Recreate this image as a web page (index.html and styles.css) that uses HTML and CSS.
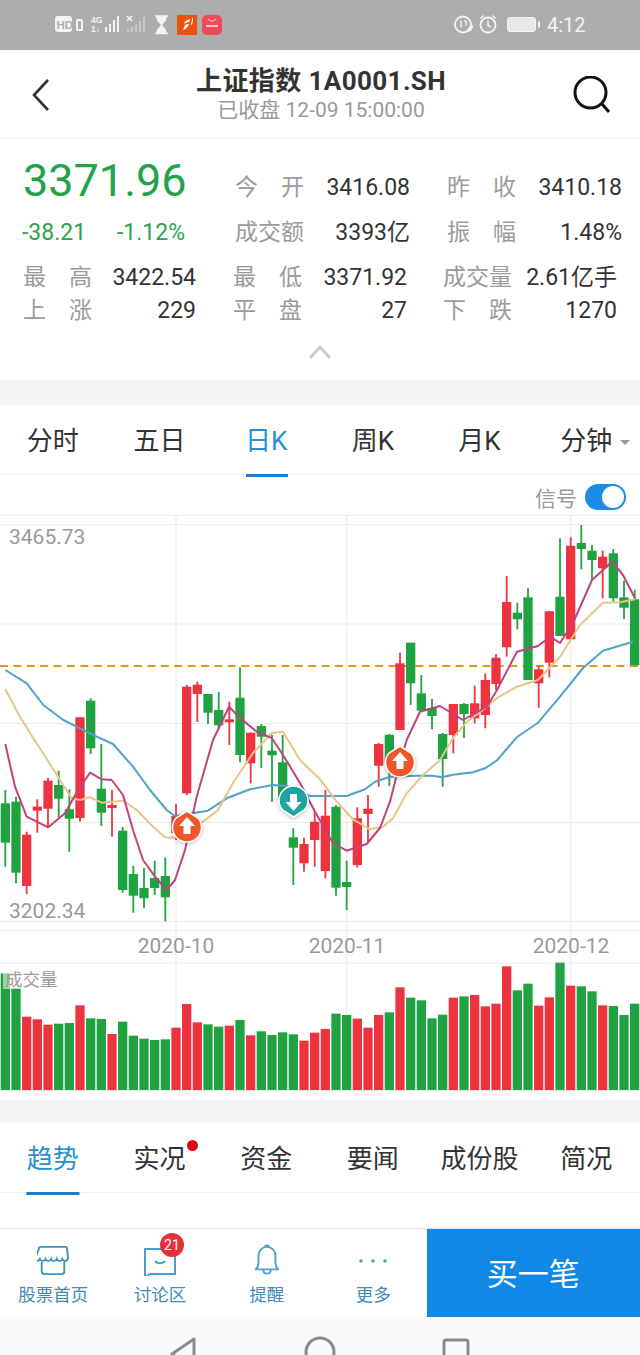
FILE: index.html
```html
<!DOCTYPE html>
<html lang="zh-CN">
<head>
<meta charset="utf-8">
<title>上证指数</title>
<link rel="stylesheet" href="styles.css">
</head>
<body>
<div class="page">
  <div class="status">
    <svg class="status-left" viewBox="55 14 167 24" width="167" height="24">
      <rect x="55" y="17" width="17" height="16" rx="3" fill="#f4f4f4"/>
      <text x="56.5" y="30" class="st-hd">HD</text>
      <rect x="76" y="20" width="7" height="12" rx="1.5" fill="#f4f4f4"/>
      <rect x="78" y="22" width="3" height="8" fill="#adadad"/>
      <text x="91" y="23.5" class="st-4g">4G</text>
      <text x="91" y="33" class="st-4g">1↓</text>
      <g fill="#f4f4f4">
        <rect x="105" y="28" width="2" height="5"/><rect x="109" y="25" width="2" height="8"/>
        <rect x="113" y="21" width="2" height="12"/><rect x="117" y="17" width="2" height="16"/>
      </g>
      <path d="M127 17l5 5M132 17l-5 5" stroke="#f4f4f4" stroke-width="1.6"/>
      <g fill="#c9c9c9">
        <rect x="127" y="30" width="2" height="3"/><rect x="131" y="28" width="2" height="5"/>
        <rect x="135" y="26" width="2" height="7"/><rect x="139" y="22" width="2" height="11"/><rect x="143" y="18" width="2" height="15"/>
      </g>
      <path d="M155 17h13M155 34.500h13M157 17.500c0 6 4 6 4.500 8.500c.5-2.500 4.500-2.500 4.500-8.500zM157 34c0-5 4-5.500 4.500-8c.5 2.500 4.500 3 4.500 8z" fill="#f4f4f4" stroke="#f4f4f4" stroke-width="1.400"/>
      <rect x="177" y="16" width="20" height="20" fill="#ee5010"/>
      <path d="M183 31l2-5c2-1 3-1 4-1c-1 3-3 5-6 6zM184 25c1-3 3-4 6-5c0 2-1 3-1 3c-2 0-3 1-5 2zM191 24c1-1 1-3 1-5l1 0c0 2 0 5-2 8z" fill="#fff"/>
      <rect x="202" y="16" width="20" height="20" rx="5" fill="#ee4a58"/>
      <path d="M208 20l3 2h2l3-2" stroke="#ffd0d0" fill="none"/>
      <rect x="206" y="26" width="12" height="2" fill="#ffc8c8"/>
    </svg>
    <div class="status-right">
      <svg viewBox="455 14 87 24" width="87" height="24">
        <circle cx="464" cy="25.500" r="8" fill="none" stroke="#f4f4f4" stroke-width="1.800"/>
        <path d="M462 21.500v7M465 22h2v5" stroke="#f4f4f4" stroke-width="1.400" fill="none"/>
        <path d="M468 33c0-4 2-6 6-7c0 4-2 7-6 7z" fill="#f4f4f4"/>
        <circle cx="489" cy="26" r="7.500" fill="none" stroke="#f4f4f4" stroke-width="1.800"/>
        <path d="M489 21.500v5l3 1.500M481.500 19.500l3-3M496.500 19.500l-3-3" stroke="#f4f4f4" stroke-width="1.600" fill="none"/>
        <rect x="508.500" y="18.500" width="28" height="14" rx="2.500" fill="#e8e8e8" stroke="#f4f4f4"/>
        <rect x="539" y="22.500" width="2" height="6" fill="#f4f4f4"/>
      </svg>
      <span class="clock">4:12</span>
    </div>
  </div>

  <header class="head">
    <svg class="head-icon" viewBox="0 0 20 34" width="20" height="34"><path d="M17 2L3 17l14 15" fill="none" stroke="#333" stroke-width="2.600"/></svg>
    <div class="head-title">
      <div class="name">上证指数 1A0001.SH</div>
      <div class="sub">已收盘 12-09 15:00:00</div>
    </div>
    <svg class="head-icon" viewBox="0 0 38 38" width="38" height="38"><circle cx="17.500" cy="16.500" r="15.500" fill="none" stroke="#111" stroke-width="3"/><path d="M29 28l7 8" stroke="#111" stroke-width="3"/></svg>
  </header>

  <section class="quote">
    <div class="quote-top">
      <div class="price-col">
        <div class="price">3371.96</div>
        <div class="change"><span>-38.21</span><span>-1.12%</span></div>
      </div>
      <div class="stats stats-top">
        <span class="lbl">今 开</span><span class="val">3416.08</span>
        <span class="lbl">昨 收</span><span class="val">3410.18</span>
        <span class="lbl">成交额</span><span class="val">3393亿</span>
        <span class="lbl">振 幅</span><span class="val">1.48%</span>
      </div>
    </div>
    <div class="stats stats-bottom">
      <span class="lbl">最 高</span><span class="val">3422.54</span>
      <span class="lbl">最 低</span><span class="val">3371.92</span>
      <span class="lbl">成交量</span><span class="val">2.61亿手</span>
      <span class="lbl">上 涨</span><span class="val">229</span>
      <span class="lbl">平 盘</span><span class="val">27</span>
      <span class="lbl">下 跌</span><span class="val">1270</span>
    </div>
    <div class="collapse"><svg viewBox="0 0 24 14" width="24" height="14"><path d="M2 13L12 2l10 11" fill="none" stroke="#ccc" stroke-width="3"/></svg></div>
  </section>

  <div class="band band-a"></div>

  <nav class="tabs">
    <div class="tab">分时</div>
    <div class="tab">五日</div>
    <div class="tab on tab-k">日K</div>
    <div class="tab">周K</div>
    <div class="tab">月K</div>
    <div class="tab">分钟<i class="caret"></i></div>
  </nav>

  <div class="signal">
    <span>信号</span>
    <div class="toggle"><i></i></div>
  </div>

  <div class="chart">
    <svg id="kchart" viewBox="0 515 640 585" width="640" height="585">
      <g stroke="#ececec" stroke-width="1.200">
        <path d="M0 515.500H640M0 524.500H640M0 624H640M0 723.500H640M0 822.500H640M0 921.500H640M0 930.500H640M0 963H640M0 1090.500H640"/>
        <path d="M176 516V1090M346.700 516V1090M570.700 516V1090"/>
      </g>
      <g id="vols"></g>
      <path d="M0 666H640" stroke="#dd9a22" stroke-width="2" stroke-dasharray="8 5.400"/>
      <g id="candles"></g>
      <polyline class="ma blue" points="5.300,670 26.700,683.300 43.300,705 63.300,720 80,728.300 96.700,736.700 113,744 133,766.700 150,790 166.700,810 175,816 195,812.700 208,810.700 226.700,798.300 250,789.300 273,785 286.700,786 310,796 346.700,796 365,789.300 375,781.700 390,776.700 416.700,775.700 433,775.700 441.700,777.300 453,774.700 473,772.300 485,768.300 496.700,760.700 516.700,737.300 538,722.700 560,696.700 583,668 603,650.700 633,641.700"/>
      <polyline class="ma yellow" points="5.300,689.300 20,716.700 33.300,738.300 43,753 60,780 71.700,798.300 80,800 90,797.300 101.700,802.700 123,800.700 136.700,810 153,826.700 165,837.300 175,837.700 203,821.700 218,810 233,783 253,753 271.700,733 283,731.700 300,760 320,779.300 336.700,801.700 353,819.300 370,829.300 383,826.700 393,818.300 406.700,793.300 423,775 440,760 453,738 467,721.700 483,710 497,698 517,686.700 538,680 560,656.700 580,625 603,602.700 620,602.300 635,599.300"/>
      <polyline class="ma pink" points="5.300,744 15,786.700 26.700,816.700 48.300,827.300 65,813.300 78,790 90,772.700 101.700,779.300 111.700,780 123,795 133,830 143,860 155,876.700 166.700,890 175,880 185,850 196.700,796.700 213,740 229,706.700 240,718 256.700,731.700 271.700,738 283,755 300,783 315,811.700 333,843 346.700,850.700 366.700,844 380,828 390,801.700 398,770 406.700,740 420,711.700 440,706 463,720 487,706.700 497,690 517,651.700 538,646 550,636.700 560,643 573,623 592,580 612,561.700 623,575 635,598.300"/>
      <g class="marker">
        <path d="M187 811l11 7a14.500 14.500 0 1 1-22 0z" fill="#f0562a" stroke="#fff" stroke-width="1.500"/>
        <path d="M187 817l8 9h-4.500v8h-7v-8H179z" fill="#fff"/>
      </g>
      <g class="marker">
        <path d="M400 746l11 7a14.500 14.500 0 1 1-22 0z" fill="#f0562a" stroke="#fff" stroke-width="1.500"/>
        <path d="M400 752l8 9h-4.500v8h-7v-8H392z" fill="#fff"/>
      </g>
      <g class="marker">
        <path d="M293.500 817l11-7a14.500 14.500 0 1 0-22 0z" fill="#1ea3a3" stroke="#fff" stroke-width="1.500"/>
        <path d="M293.500 811l8-9h-4.500v-8h-7v8H285.500z" fill="#fff"/>
      </g>
      <rect x="3" y="971" width="55" height="18" fill="#fff" fill-opacity=".55"/>
      <text x="9" y="544" class="axis">3465.73</text>
      <text x="9" y="918" class="axis">3202.34</text>
      <text x="176" y="953" class="axis mid">2020-10</text>
      <text x="347" y="953" class="axis mid">2020-11</text>
      <text x="571" y="953" class="axis mid">2020-12</text>
      <text x="5" y="986" class="axis vol-label">成交量</text>
    </svg>
  </div>

  <div class="band band-b"></div>

  <nav class="tabs tabs-lower">
    <div class="tab on tab-wide">趋势</div>
    <div class="tab">实况<i class="dot"></i></div>
    <div class="tab">资金</div>
    <div class="tab">要闻</div>
    <div class="tab">成份股</div>
    <div class="tab">简况</div>
  </nav>

  <div class="spacer"></div>

  <footer class="foot">
    <div class="foot-item">
      <svg viewBox="0 0 34 32" width="32" height="32"><path d="M4 2h26a2 2 0 0 1 2 2l1 10c-2 5-5 3-6 1c-1 3-5 3-6 0c-1 3-5 3-6 0c-1 3-5 3-6 0c-1 3-5 3-6 0c-1 2-3 3-5-1L2 4a2 2 0 0 1 2-2z" fill="none" stroke="#3d93bb" stroke-width="2"/><path d="M5 18v10a3 3 0 0 0 3 3h18a3 3 0 0 0 3-3V18" fill="none" stroke="#3d93bb" stroke-width="2"/></svg>
      <span>股票首页</span>
    </div>
    <div class="foot-item">
      <div class="bubble">
        <svg viewBox="0 0 34 32" width="34" height="32"><path d="M2 5h30v25H7l-5 3z" fill="none" stroke="#4aa0c6" stroke-width="2"/><path d="M12 17c2 3 8 3 10 0" fill="none" stroke="#4aa0c6" stroke-width="2"/></svg>
        <b class="badge">21</b>
      </div>
      <span>讨论区</span>
    </div>
    <div class="foot-item">
      <svg viewBox="0 0 34 34" width="34" height="32"><path d="M5 27c2-2 3-3 3-7v-8c0-5 4-9 9-9s9 4 9 9v8c0 4 1 5 3 7z" fill="none" stroke="#4aa0c6" stroke-width="2" stroke-linejoin="round"/><path d="M13 27c0 6 8 6 8 0M15 3c0-2 4-2 4 0" fill="none" stroke="#4aa0c6" stroke-width="2"/></svg>
      <span>提醒</span>
    </div>
    <div class="foot-item">
      <svg viewBox="0 0 34 32" width="34" height="32"><g fill="#4aa0c6"><circle cx="5" cy="17" r="1.800"/><circle cx="17" cy="17" r="1.800"/><circle cx="29" cy="17" r="1.800"/></g></svg>
      <span>更多</span>
    </div>
    <button class="buy">买一笔</button>
  </footer>

  <div class="sysnav">
    <svg viewBox="0 1317 640 38" width="640" height="38">
      <path d="M194 1339v30l-22-15z" fill="none" stroke="#8a8a8a" stroke-width="3" stroke-linejoin="round"/>
      <circle cx="320" cy="1352" r="14" fill="none" stroke="#8a8a8a" stroke-width="3"/>
      <rect x="444" y="1340" width="24" height="30" rx="2" fill="none" stroke="#8a8a8a" stroke-width="3"/>
    </svg>
  </div>
</div>
<script src="chart.js"></script>
</body>
</html>
```
FILE: styles.css
```css
* { box-sizing: border-box; }
html, body { margin: 0; padding: 0; background: #fff; }
body { font-family: Roboto, "Noto Sans CJK SC", sans-serif; color: #333; }
.page { width: 640px; height: 1355px; overflow: hidden; display: flex; flex-direction: column; }

.status { height: 50px; flex: none; background: #adadad; display: flex; align-items: center; justify-content: space-between; padding: 0 55px; }
.status svg { display: block; }
.status-right { display: flex; align-items: center; gap: 6px; }
.clock { color: #f4f4f4; font-size: 20px; width: 38px; }
.st-hd { font: 700 11.500px "Liberation Sans", sans-serif; fill: #adadad; }
.st-4g { font: 700 8.500px "Liberation Sans", sans-serif; fill: #f4f4f4; }

.head { height: 89px; flex: none; display: grid; grid-template-columns: 1fr auto 1fr; align-items: center; padding: 1px 29px 0 31px; border-bottom: 1.500px solid #eee; }
.head-icon { display: block; }
.head-icon:last-child { justify-self: end; }
.head-title { text-align: center; }
.name { font-size: 26px; line-height: 30px; font-weight: 700; color: #333; letter-spacing: .4px; }
.sub { font-size: 21px; line-height: 28px; color: #999; }

.quote { height: 241px; flex: none; padding: 0 0 0 23px; }
.quote-top { display: flex; padding-top: 26px; height: 122px; }
.price-col { width: 212px; flex: none; margin-top: -7px; }
.price { font-size: 45px; line-height: 46px; color: #22a24a; margin-bottom: 6px; }
.change { width: 163px; display: flex; justify-content: space-between; font-size: 23px; line-height: 46px; color: #2da350; margin-left: -1px; }
.stats { display: grid; align-items: center; }
.stats-top { grid-template-columns: 69px 106px 106px 106px; grid-auto-rows: 45px; }
.stats-bottom { grid-template-columns: 69px 104px 106px 105px 105px 105px; grid-auto-rows: 33px; }
.lbl { font-size: 23px; line-height: 30px; color: #9b9b9b; text-align: justify; text-align-last: justify; width: 69px; display: block; }
.stats-top .lbl:nth-child(3), .stats-top .lbl:nth-child(7), .stats-bottom .lbl:nth-child(3), .stats-bottom .lbl:nth-child(9) { margin-left: 37px; }
.stats-bottom .lbl:nth-child(5), .stats-bottom .lbl:nth-child(11) { margin-left: 36px; }
.val { font-size: 23px; line-height: 30px; color: #333; text-align: right; }
.collapse { display: flex; justify-content: center; margin: 18px 0 0 -23px; }
.collapse svg { display: block; }

.band { flex: none; background: #f5f5f5; }
.band-a { height: 25px; }
.band-b { height: 23px; }

.tabs { height: 70px; flex: none; display: grid; grid-template-columns: repeat(6, 1fr); border-bottom: 1.500px solid #eee; }
.tab { position: relative; text-align: center; font-size: 26px; line-height: 72px; color: #333; padding-right: 1px; }
.tab.on { color: #2a8fd0; }
.tab.on::after { content: ""; position: absolute; left: 50%; bottom: 0; height: 3.500px; background: #2079c7; transform: translateX(-50%); }
.tab-k::after { width: 42px; }
.tab-wide::after { width: 53px; }
.caret { position: absolute; top: 35px; right: 10px; border: 5px solid transparent; border-top: 5px solid #999; border-bottom: 0; }
.dot { position: absolute; top: 17px; right: 15px; width: 11px; height: 11px; border-radius: 50%; background: #e60012; }

.signal { height: 40px; flex: none; display: flex; justify-content: flex-end; align-items: center; gap: 8px; padding: 3px 14px 0 0; font-size: 21px; color: #999; }
.toggle { width: 41px; height: 26px; border-radius: 13px; background: #1b8de8; position: relative; }
.toggle i { position: absolute; right: 2px; top: 2px; width: 22px; height: 22px; border-radius: 50%; background: #fff; }

.chart { height: 585px; flex: none; }
.chart svg { display: block; }
.ma { fill: none; stroke-width: 2; stroke-linejoin: round; }
.blue { stroke: #4fa3c9; }
.yellow { stroke: #e8c487; }
.pink { stroke: #c4417f; }
.marker { filter: drop-shadow(0 1px 2px rgba(0,0,0,.25)); }
.axis { font-size: 21px; fill: #9a9a9a; }
.mid { text-anchor: middle; }
.vol-label { font-size: 17.500px; }
.up { fill: #ee3340; }
.down { fill: #1fa342; }

.spacer { height: 35px; flex: none; }

.foot { height: 89px; flex: none; display: flex; border-top: 1px solid #e6e6e6; }
.foot-item { width: 106.670px; flex: none; display: flex; flex-direction: column; align-items: center; padding-top: 15px; font-size: 17.500px; line-height: 24px; color: #3d8db8; }
.foot-item svg { display: block; }
.foot-item > span { margin-top: 7px; }
.bubble { position: relative; width: 34px; height: 32px; }
.badge { position: absolute; left: 17px; top: -11px; width: 24px; height: 24px; border-radius: 50%; background: #e8303a; color: #fff; font-size: 14px; font-weight: 400; line-height: 24px; text-align: center; }
.buy { flex: 1; border: 0; background: #1188e6; color: #fff; font: 400 31px/1 Roboto, "Noto Sans CJK SC", sans-serif; padding: 2px 0 0; }

.sysnav { flex: 1; background: #fafafa; overflow: hidden; }
.sysnav svg { display: block; }
```
FILE: chart.js
```js
// [up?, bodyTop, bodyBottom, wickTop, wickBottom]
var K = [
[0,803.3,842.7,790,866.7],[0,801.7,872.7,796.7,883.3],[1,834.7,886,831.7,894],[1,806.7,810.7,799.3,832.7],
[1,780.7,808.7,778,828],[0,785,798.7,770.7,817.3],[0,809.3,818.7,789.3,851.7],[1,717.3,818,717.3,821.7],
[0,700.7,748.3,698.3,754],[0,788.7,812.7,744,826],[1,805,808,790,836.7],[0,830.7,890,827,892.7],
[0,874,895.7,866,912.7],[0,888,898.3,868,908.3],[0,878,888,860.7,895],[0,876,897.3,857.3,921.3],
[1,816,833,804,840],[1,686.7,793.3,685,795],[1,684.7,694,681.7,722],[0,694,712.7,694,724],
[0,710,725.3,692,730],[1,719.3,722.3,701.7,745],[0,697.7,755,667.3,762.3],[1,732.7,763.3,732.7,783.3],
[0,726,736.7,724,768],[0,750.7,755.3,735,801.7],[0,762.3,798,735,807],[0,837.3,847.7,828.3,885],
[1,844,863.3,837.7,871.7],[1,821.7,840,811.7,866.7],[1,815.7,871,790,878.3],[0,806.7,887.7,805,895.7],
[0,882,887,860.7,910],[1,818.3,865,807.3,867.7],[1,808.7,814,795,843.3],[1,744,765.7,743,786.7],
[0,734.7,762,734,786],[1,663.3,730,652.7,730],[0,642.7,683.3,642.7,705],[0,693.3,710.7,675,712],
[0,708,716,698.7,729.3],[0,734,759,733,786.7],[1,704,735,704,753.3],[0,704,714,703,738],
[1,703.3,718.3,685.7,723.3],[1,680,715,673.3,728.3],[1,657.7,684,654,690],[1,602,647.3,576,656.7],
[0,612.7,619.3,602.7,629.3],[0,597.3,680,588.3,680],[1,669.3,683.3,665,707.7],[1,611.3,662.7,611,677.3],
[0,596.7,636,538.3,636],[1,545.7,639.3,537.3,640],[0,543,549,525,569.3],[0,550.7,560,545,580],
[1,556.7,568.3,550.7,598.3],[0,553.3,598.3,549,601.7],[0,597.3,607.7,580.7,619],[0,599.3,665.3,590,665.3]
];
// bar tops in 3x crop pixels, relative to y = 955
var V = [55,100,185,193,209,206,204,151,190,192,237,200,242,251,255,253,218,147,202,208,215,212,195,241,229,240,232,238,257,233,
222,176,180,191,218,180,172,97,128,136,190,179,128,124,120,154,146,34,106,86,152,127,23,92,94,109,151,153,180,146];
var VUP = [0,0,1,1,1,0,0,1,0,0,1,0,0,0,0,0,1,1,1,0,0,1,0,1,0,0,0,0,1,1,
1,0,0,1,1,1,0,1,0,0,0,0,1,0,1,1,1,1,0,0,1,1,0,1,0,0,1,0,0,0];
var NS = "http://www.w3.org/2000/svg";
function rect(parent, cls, x, y, w, h) {
  var r = document.createElementNS(NS, "rect");
  r.setAttribute("class", cls);
  r.setAttribute("x", x); r.setAttribute("y", y);
  r.setAttribute("width", w); r.setAttribute("height", h);
  parent.appendChild(r);
}
var step = 32 / 3, first = 16 / 3;
var cg = document.getElementById("candles"), vg = document.getElementById("vols");
K.forEach(function (c, i) {
  var x = first + step * i, cls = c[0] ? "up" : "down";
  rect(cg, cls, x - 0.9, c[3], 1.8, c[4] - c[3]);
  rect(cg, cls, x - 4.65, c[1], 9.3, c[2] - c[1]);
});
V.forEach(function (t, i) {
  var x = first + step * i, top = 955 + t / 3;
  rect(vg, VUP[i] ? "up" : "down", x - 4.65, top, 9.3, 1090 - top);
});
```
